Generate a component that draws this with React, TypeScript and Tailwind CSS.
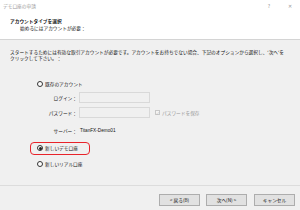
const jp = { fontFamily: '"Noto Sans CJK JP", "Liberation Sans", sans-serif' };

function Radio({ checked }: { checked?: boolean }) {
  return (
    <span className="flex h-[6px] w-[6px] shrink-0 items-center justify-center rounded-full border-[0.8px] border-[#333] bg-white">
      {checked && <span className="h-[3px] w-[3px] rounded-full bg-[#222]" />}
    </span>
  );
}

function Field({ label }: { label: string }) {
  return (
    <div className="flex items-center">
      <span className="w-[42px] pr-[2px] text-right">{label}</span>
      <div className="h-[11px] w-[71px] border border-[#d9d9d9] bg-[#f0f0f0]" />
    </div>
  );
}

function Button({ children }: { children: React.ReactNode }) {
  return (
    <div className="flex h-[12px] w-[41px] items-center justify-center border border-[#adadad] bg-[#e1e1e1] text-[#111]">
      {children}
    </div>
  );
}

export default function App() {
  return (
    <div
      className="flex h-[210px] w-[300px] flex-col overflow-hidden bg-[#f0f0f0] text-[4.7px] leading-[6px] text-[#111]"
      style={jp}
    >
      {/* header */}
      <div className="h-[40px] shrink-0 border-b-[1.5px] border-[#d4d4d4] bg-white">
        <div className="flex h-[11px] items-center justify-between pl-[3px] pr-[8px] text-[#999]">
          <span>デモ口座の申請</span>
          <div className="flex items-center gap-[18px] text-[5px]">
            <span>?</span>
            <span>✕</span>
          </div>
        </div>
        <div className="mt-[7px] pl-[10px] font-bold">アカウントタイプを選択</div>
        <div className="mt-[1px] pl-[20px]">始めるにはアカウントが必要：</div>
      </div>

      {/* body */}
      <div className="flex flex-1 flex-col">
        <div className="mt-[9px] px-[10px]">
          <p>スタートするためには有効な取引アカウントが必要です。アカウントをお持ちでない場合、下記のオプションから選択し、'次へ'を</p>
          <p>クリックして下さい。：</p>
        </div>

        <div className="mt-[20px] flex flex-col pl-[37px]">
          <label className="flex items-center gap-[2px]">
            <Radio />
            <span>既存のアカウント</span>
          </label>

          <div className="mt-[5px] flex flex-col gap-[4px]">
            <Field label="ログイン：" />
            <div className="flex items-center">
              <Field label="パスワード：" />
              <span className="ml-[5px] flex items-center gap-[2px] text-[#999]">
                <span className="flex h-[5px] w-[5px] items-center justify-center border-[0.7px] border-[#c8c8c8] bg-[#f4f4f4] text-[4px] leading-none text-[#bbb]">
                  ✓
                </span>
                パスワードを保存
              </span>
            </div>
            <div className="mt-[6px] flex items-center">
              <span className="w-[42px] pr-[2px] text-right">サーバー：</span>
              <span className="pl-[1px]" style={{ fontFamily: '"Liberation Sans", sans-serif' }}>
                TitanFX-Demo01
              </span>
            </div>
          </div>

          <label className="relative mt-[11px] flex w-fit items-center gap-[2px]">
            <span className="absolute left-[-7px] top-[-3.5px] h-[13px] w-[60px] rounded-[4px] border-[1.5px] border-[#e8232a]" />
            <Radio checked />
            <span>新しいデモ口座</span>
          </label>
          <label className="mt-[10px] flex items-center gap-[2px]">
            <Radio />
            <span>新しいリアル口座</span>
          </label>
        </div>

        <div className="mt-auto border-t-[1.5px] border-[#dcdcdc] px-[5px] pb-[4px] pt-[8px]">
          <div className="flex justify-end">
            <div className="flex gap-[6px]">
              <Button>&lt; 戻る(B)</Button>
              <Button>次へ(N) &gt;</Button>
            </div>
            <div className="ml-[7px]">
              <Button>キャンセル</Button>
            </div>
          </div>
        </div>
      </div>
    </div>
  );
}
